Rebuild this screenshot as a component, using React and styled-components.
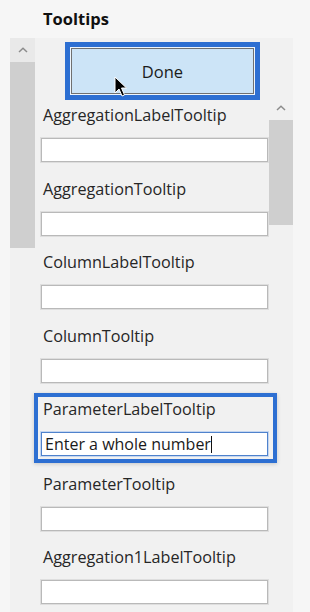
import React from 'react'
import styled, { createGlobalStyle } from 'styled-components'

const Global = createGlobalStyle`
  html, body { margin: 0; padding: 0; }
  body {
    background: #f8f8f8;
    font-family: "Open Sans", "Noto Sans", sans-serif;
  }
`

const Page = styled.div`
  width: 310px;
  height: 612px;
  overflow: hidden;
  background: #f6f6f6;
  display: flex;
  flex-direction: column;
`

const Header = styled.div`
  flex-shrink: 0;
  height: 38px;
  padding-left: 43px;
  padding-bottom: 2px;
  box-sizing: border-box;
  display: flex;
  align-items: center;
  font-size: 16.5px;
  font-weight: 700;
  color: #111;
`

const Panel = styled.div`
  flex: 1 0 auto;
  margin-left: 10px;
  width: 283px;
  background: #f1f1f1;
  display: flex;
  align-items: flex-start;
`

const ScrollBar = styled.div`
  width: ${p => p.$width}px;
  flex-shrink: 0;
  display: flex;
  flex-direction: column;
  padding-top: ${p => p.$offset || 0}px;
`

const ScrollUp = styled.div`
  height: 24px;
  background: ${p => p.$bg || 'transparent'};
  display: flex;
  align-items: center;
  justify-content: center;
`

const Thumb = styled.div`
  height: ${p => p.$height}px;
  background: #cfcfcf;
`

const Content = styled.div`
  width: 234px;
  flex-shrink: 0;
  padding: 0 1px 0 6px;
  box-sizing: border-box;
`

const DoneRing = styled.div`
  position: relative;
  margin: 4px 0 0 24px;
  width: 195px;
  height: 58px;
  box-sizing: border-box;
  border: 5px solid #2d6fd2;
  padding: 1px;
  background: #eef5fc;
`

const DoneButton = styled.div`
  height: 100%;
  box-sizing: border-box;
  border: 1px solid #707070;
  background: #cce4f7;
  display: flex;
  align-items: center;
  justify-content: center;
  font-size: 16.5px;
  color: #1b1b1b;
`

const Cursor = styled.svg`
  position: absolute;
  left: 44px;
  top: 29px;
`

const List = styled.div`
  margin-top: 5px;
`

const Item = styled.div`
  margin-bottom: 16.5px;
  ${p => p.$focused && `
    margin: -6px -9px 10.5px -7px;
    border: 4px solid #2d6fd2;
    padding: 2px 5px 3px 3px;
    box-shadow: 0 1px 4px rgba(0,0,0,0.18);
    position: relative;
  `}
`

const Label = styled.div`
  height: 20px;
  line-height: 20px;
  padding-left: 2px;
  margin-bottom: 13px;
  font-size: 16.2px;
  color: #262626;
  white-space: nowrap;
`

const TextBox = styled.div`
  height: 24px;
  box-sizing: border-box;
  background: #fff;
  border: 1px solid ${p => (p.$focused ? '#4f82cc' : '#b9b9b9')};
  box-shadow: 0 0 0 1px ${p => (p.$focused ? '#c4d6f0' : '#dedede')};
  padding-left: 3px;
  display: flex;
  align-items: center;
  font-size: 16px;
  color: #1a1a1a;
  white-space: nowrap;
`

const Caret = styled.span`
  display: inline-block;
  width: 1px;
  height: 17px;
  background: #111;
`

const Chevron = () => (
  <svg width="10" height="6" viewBox="0 0 10 6">
    <path d="M1 5 L5 1.2 L9 5" fill="none" stroke="#8c8c8c" strokeWidth="1.5" />
  </svg>
)

const fields = [
  { name: 'AggregationLabelTooltip' },
  { name: 'AggregationTooltip' },
  { name: 'ColumnLabelTooltip' },
  { name: 'ColumnTooltip' },
  { name: 'ParameterLabelTooltip', value: 'Enter a whole number', focused: true },
  { name: 'ParameterTooltip' },
  { name: 'Aggregation1LabelTooltip' },
]

export default function App() {
  return (
    <Page>
      <Global />
      <Header>Tooltips</Header>
      <Panel>
        <ScrollBar $width={25}>
          <ScrollUp $bg="#e9e9e9"><Chevron /></ScrollUp>
          <Thumb $height={186} />
        </ScrollBar>
        <Content>
          <DoneRing>
            <DoneButton>Done</DoneButton>
            <Cursor width="14" height="21" viewBox="0 0 14 21">
              <path d="M1 1 L1 17 L5 13 L8 20 L10.5 19 L7.5 12 L12.5 12 Z" fill="#000" stroke="#fff" strokeWidth="1" strokeLinejoin="round" />
            </Cursor>
          </DoneRing>
          <List>
            {fields.map(f => (
              <Item key={f.name} $focused={f.focused}>
                <Label>{f.name}</Label>
                <TextBox $focused={f.focused}>
                  {f.value}
                  {f.focused && <Caret />}
                </TextBox>
              </Item>
            ))}
          </List>
        </Content>
        <ScrollBar $width={24} $offset={58}>
          <ScrollUp><Chevron /></ScrollUp>
          <Thumb $height={105} />
        </ScrollBar>
      </Panel>
    </Page>
  )
}
